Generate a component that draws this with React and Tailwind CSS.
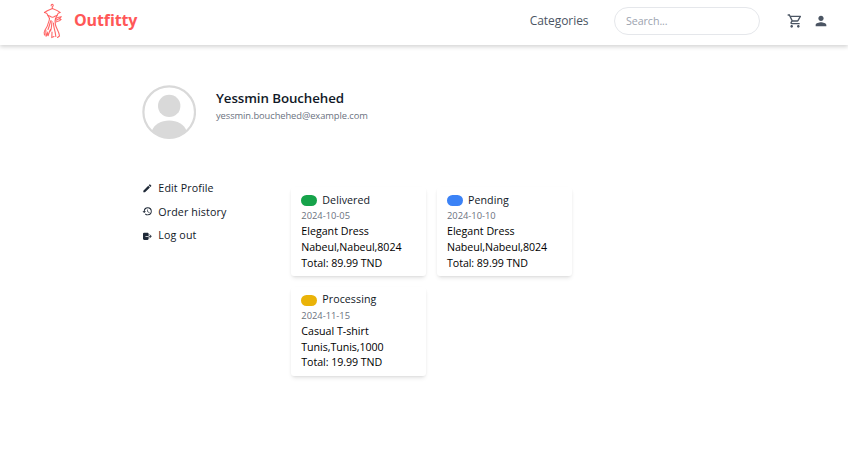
import { MdOutlineShoppingCart, MdPerson, MdEdit, MdHistory } from "react-icons/md";
import { IoLogOut } from "react-icons/io5";

const orders = [
  { status: "Delivered", color: "bg-[#16a34a]", date: "2024-10-05", item: "Elegant Dress", address: "Nabeul,Nabeul,8024", total: "89.99" },
  { status: "Pending", color: "bg-[#3b82f6]", date: "2024-10-10", item: "Elegant Dress", address: "Nabeul,Nabeul,8024", total: "89.99" },
  { status: "Processing", color: "bg-[#eab308]", date: "2024-11-15", item: "Casual T-shirt", address: "Tunis,Tunis,1000", total: "19.99" },
];

function DressLogo() {
  return (
    <svg width="20" height="36" viewBox="0 0 20 36" fill="none" stroke="#ff5757" strokeWidth="1.1" strokeOpacity="0.9" strokeLinecap="round" className="shrink-0">
      <path d="M8.2 2.8C8 0.800 10.600 0.900 10.200 2.800L9.300 4V5.500" />
      <path d="M1.500 9.500C3.500 7.500 6.500 6.500 9.300 5.500C12 6.500 15 7.500 17 9.500" />
      <path d="M1.500 9.500C3.500 9.800 4.500 10.800 5 12.500C6 12 8 14.500 9.500 14.300C11 14.500 13 12 14 12.500C14.500 10.800 15.500 9.800 17 9.500" />
      <path d="M5 12.500L6.500 15.500M14 12.500L12.500 15.500" />
      <path d="M6.500 15.500C6.500 18 5 20 4.500 22.500C4 25 1.500 26 1.200 29.500L1.500 32" />
      <path d="M2.800 27L3 33.500L4.500 30L5 33L6.500 28.500L7.500 26.500" />
      <path d="M8 17.500C6.500 21 6.500 23 5 26.500M9 18.500C8.500 22 8.800 25 7.500 28" />
      <path d="M12.500 15.500C11.500 18 12 20 12.500 22C13.500 26 16.500 29 16.500 33L14.500 34.500" />
      <path d="M10.500 20C10.300 24 12.500 28 12.800 33.500M9 29L8.800 34.500L11 33.500" />
      <path d="M12.500 16C14 13.500 16 14.800 18.500 13.500L16.500 16L18 16.500C16.500 18.500 14.500 18 13 19M13 17.200L16.500 15.500" />
    </svg>
  );
}

function Avatar() {
  return (
    <svg width="54" height="54" viewBox="0 0 54 54" fill="#d9d9d9" className="shrink-0">
      <circle cx="27.2" cy="27.1" r="25.8" fill="none" stroke="#d9d9d9" strokeWidth="2.2" />
      <circle cx="27.2" cy="20.9" r="11.2" />
      <path d="M9.7 46C12.200 39.500 19.200 35.500 27.200 35.500S42.200 39.500 44.700 46C40.200 50.500 34.200 53.500 27.200 53.500S14.200 50.500 9.700 46Z" />
    </svg>
  );
}

function OrderCard({ order }) {
  return (
    <article className="h-[89px] w-[135px] rounded-[3px] bg-white px-[10.300px] pt-[5.700px] text-[10.670px] leading-[15.800px] text-black shadow-[0_3px_4px_-1px_rgba(0,0,0,0.1),0_1px_3px_-1px_rgba(0,0,0,0.1)]">
      <div className="flex items-center gap-[5px] text-[#111827]">
        <span className={`h-[11px] w-4 rounded-full ${order.color}`} />
        <span className="font-medium tracking-[0.060px]">{order.status}</span>
      </div>
      <p className="text-[9.330px] text-[#6b7280]">{order.date}</p>
      <p className="font-medium">{order.item}</p>
      <p className="tracking-[-0.060px]">{order.address}</p>
      <p className="tracking-[-0.060px]">Total: {order.total} TND</p>
    </article>
  );
}

export default function App() {
  return (
    <div className="h-[464px] overflow-hidden bg-white font-['Open_Sans',sans-serif] text-[#111827]">
      <header className="flex h-[45px] items-center pb-1 pl-[43px] pr-[19px] shadow-[0_2px_4px_rgba(0,0,0,0.17)]">
        <DressLogo />
        <span className="mb-0.5 ml-[11px] text-[16px] font-bold tracking-[-0.120px] text-[#ff5757]">Outfitty</span>
        <a className="ml-auto text-[12px] tracking-[-0.050px] text-[#4b5563]">Categories</a>
        <input placeholder="Search..." className="ml-[25.500px] h-7 w-[146px] rounded-full border border-[#e5e7eb] px-[11px] text-[10.670px] tracking-[-0.060px] placeholder:text-[#9ca3af]" />
        <MdOutlineShoppingCart className="ml-[27px] size-4 text-[#4b5563]" />
        <MdPerson className="ml-[10px] size-4 text-[#4b5563]" />
      </header>
      <main className="pl-[142px] pt-10">
        <section className="flex gap-5">
          <Avatar />
          <div className="pt-1">
            <h1 className="text-[13.330px] font-semibold leading-[19px] tracking-[-0.090px]">Yessmin Bouchehed</h1>
            <p className="text-[9.330px] leading-4 tracking-[-0.070px] text-[#6b7280]">yessmin.bouchehed@example.com</p>
          </div>
        </section>
        <div className="mt-[42px] flex">
          <nav className="flex w-[149px] flex-col gap-2 text-[10.670px] leading-[15.700px] font-medium tracking-[0.120px]">
            <a className="flex items-center gap-[5.700px]"><MdEdit className="size-[10.670px] -translate-y-px text-[#1f2937]" />Edit Profile</a>
            <a className="flex items-center gap-[5.700px]"><MdHistory className="size-[10.670px] -translate-y-px text-[#1f2937]" />Order history</a>
            <a className="flex items-center gap-[5.700px]"><IoLogOut className="size-[10.670px] text-[#1f2937]" />Log out</a>
          </nav>
          <section className="mt-[6px] grid grid-cols-[135px_135px] gap-x-[10.700px] gap-y-[10.500px]">
            {orders.map((order) => <OrderCard key={order.date} order={order} />)}
          </section>
        </div>
      </main>
    </div>
  );
}
